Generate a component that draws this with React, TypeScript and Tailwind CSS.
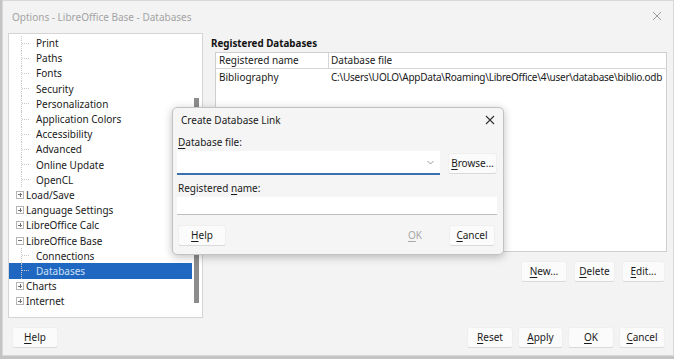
import React from 'react'

const font = { fontFamily: '"Noto Sans", "Open Sans", sans-serif' }

type Node = { label: string; level: 0 | 1; expander?: '+' | '-'; selected?: boolean }

const tree: Node[] = [
  { label: 'Print', level: 1 },
  { label: 'Paths', level: 1 },
  { label: 'Fonts', level: 1 },
  { label: 'Security', level: 1 },
  { label: 'Personalization', level: 1 },
  { label: 'Application Colors', level: 1 },
  { label: 'Accessibility', level: 1 },
  { label: 'Advanced', level: 1 },
  { label: 'Online Update', level: 1 },
  { label: 'OpenCL', level: 1 },
  { label: 'Load/Save', level: 0, expander: '+' },
  { label: 'Language Settings', level: 0, expander: '+' },
  { label: 'LibreOffice Calc', level: 0, expander: '+' },
  { label: 'LibreOffice Base', level: 0, expander: '-' },
  { label: 'Connections', level: 1 },
  { label: 'Databases', level: 1, selected: true },
  { label: 'Charts', level: 0, expander: '+' },
  { label: 'Internet', level: 0, expander: '+' },
]

function Expander({ sign }: { sign: '+' | '-' }) {
  return (
    <span className="relative flex h-[8px] w-[8px] items-center justify-center border border-[#b5b5b5] bg-white">
      <span className="absolute h-px w-[4px] bg-[#707070]" />
      {sign === '+' ? <span className="absolute h-[4px] w-px bg-[#707070]" /> : null}
    </span>
  )
}

function TreeRow({ node }: { node: Node }) {
  return (
    <div
      className={
        'relative flex h-[15.2px] items-center text-[10px] leading-none ' +
        (node.selected ? 'mr-[10px] bg-[#1f67c1] text-[#cfe0f5]' : 'text-[#1a1a1a]')
      }
    >
      {node.level === 1 ? (
        <>
          <span className="absolute left-[12px] top-0 h-full w-px border-l border-dotted border-[#c8c8c8]" />
          <span className="ml-[13px] h-px w-[7px] border-t border-dotted border-[#c8c8c8]" />
          <span className="ml-[7px]">{node.label}</span>
        </>
      ) : (
        <>
          <span className="ml-[7px]">
            <Expander sign={node.expander ?? '+'} />
          </span>
          <span className="ml-[2px]">{node.label}</span>
        </>
      )}
    </div>
  )
}

function Btn({ children, className = '' }: { children: React.ReactNode; className?: string }) {
  return (
    <div
      className={
        'flex h-[21px] shrink-0 items-center justify-center rounded-[3px] border border-[#efefef] border-b-[#dadada] bg-[#fbfbfb] text-[10px] text-[#1a1a1a] ' +
        className
      }
    >
      {children}
    </div>
  )
}

function U({ c }: { c: string }) {
  return <span className="underline underline-offset-2">{c}</span>
}

export default function App() {
  return (
    <div className="relative h-[359px] w-[674px] overflow-hidden bg-[#c4c4c4]" style={font}>
      <div className="ml-[2px] flex h-[356px] flex-col border border-[#d8d8d8] bg-[#f3f3f3]">
        {/* title bar */}
        <div className="flex h-[32px] items-center justify-between pl-[9px] pr-[9px]">
          <span className="text-[10px] text-[#a3a3a3]">Options - LibreOffice Base - Databases</span>
          <svg width="10" height="10" viewBox="0 0 10 10" className="mr-[2px] mt-[-2px]">
            <path d="M1 1 L9 9 M9 1 L1 9" stroke="#9a9a9a" strokeWidth="1" />
          </svg>
        </div>

        <div className="flex">
          {/* tree */}
          <div className="relative ml-[5px] h-[285px] w-[195px] shrink-0 border border-[#d4d4d4] bg-white pt-[1.5px]">
            {tree.map((n) => (
              <TreeRow key={n.label} node={n} />
            ))}
            <div className="absolute left-[185px] top-[64px] h-[205px] w-[5px] bg-[#8c8c8c]" />
          </div>

          {/* right pane */}
          <div className="ml-[8px] flex min-w-0 flex-1 flex-col">
            <div className="mt-[6px] text-[9.8px] font-bold leading-none text-[#111]">Registered Databases</div>
            <div className="ml-[4px] mr-[6px] mt-[3px] h-[200px] overflow-hidden border border-[#cfcfcf] bg-white">
              <div className="flex h-[16px] border-b border-[#d6d6d6] text-[10px] leading-none text-[#1a1a1a]">
                <div className="flex w-[113px] shrink-0 items-center border-r border-[#d6d6d6] pl-[3px]">Registered name</div>
                <div className="flex flex-1 items-center pl-[2px]">Database file</div>
              </div>
              <div className="flex h-[17px] text-[10px] leading-none text-[#1a1a1a]">
                <div className="flex w-[113px] shrink-0 items-center pl-[3px]">Bibliography</div>
                <div className="flex flex-1 items-center whitespace-nowrap pl-[2px] tracking-[-0.25px]">
                  C:\Users\UOLO\AppData\Roaming\LibreOffice\4\user\database\biblio.odb
                </div>
              </div>
            </div>
            <div className="mr-[8px] mt-[9px] flex justify-end gap-[7px]">
              <Btn className="w-[46px]">
                <U c="N" />
                ew...
              </Btn>
              <Btn className="w-[41px]">
                <U c="D" />
                elete
              </Btn>
              <Btn className="w-[43px]">
                <U c="E" />
                dit...
              </Btn>
            </div>
          </div>
        </div>

        {/* bottom buttons */}
        <div className="mt-[9px] flex items-center pl-[9px] pr-[8px]">
          <Btn className="w-[46px]">
            <U c="H" />
            elp
          </Btn>
          <div className="flex-1" />
          <div className="flex gap-[5px]">
            <Btn className="w-[46px]">
              <U c="R" />
              eset
            </Btn>
            <Btn className="w-[45px]">
              <U c="A" />
              pply
            </Btn>
            <Btn className="w-[46px]">
              <U c="O" />K
            </Btn>
            <Btn className="w-[46px]">
              <U c="C" />
              ancel
            </Btn>
          </div>
        </div>
      </div>

      {/* Create Database Link dialog */}
      <div className="absolute left-[172px] top-[107px] flex h-[148px] w-[332px] flex-col rounded-[5px] border border-[#c2c2c2] bg-[#f5f5f5] shadow-[0_2px_8px_rgba(0,0,0,0.25)]">
        <div className="flex h-[24px] items-center justify-between pl-[8px] pr-[8px]">
          <span className="text-[10px] text-[#1a1a1a]">Create Database Link</span>
          <svg width="10" height="10" viewBox="0 0 10 10">
            <path d="M1 1 L9 9 M9 1 L1 9" stroke="#333" strokeWidth="1.1" />
          </svg>
        </div>
        <div className="mt-[5px] pl-[5px] text-[10px] leading-none text-[#1a1a1a]">
          <U c="D" />
          atabase file:
        </div>
        <div className="mt-[4px] flex items-center pl-[4px] pr-[6px]">
          <div className="flex h-[24px] w-[263px] items-center justify-end border-b-2 border-[#3a6fb0] bg-white pr-[6px]">
            <svg width="7" height="5" viewBox="0 0 7 5">
              <path d="M0.5 1 L3.5 4 L6.5 1" fill="none" stroke="#9a9a9a" strokeWidth="1" />
            </svg>
          </div>
          <div className="flex-1" />
          <Btn className="w-[49px]">
            <U c="B" />
            rowse...
          </Btn>
        </div>
        <div className="mt-[8px] pl-[5px] text-[10px] leading-none text-[#1a1a1a]">
          Registered <U c="n" />
          ame:
        </div>
        <div className="ml-[4px] mr-[6px] mt-[4px] h-[18px] border-b border-[#bdbdbd] bg-white" />
        <div className="mt-[10px] flex items-center pl-[5px] pr-[8px]">
          <Btn className="w-[48px]">
            <U c="H" />
            elp
          </Btn>
          <div className="flex-1" />
          <div className="mr-[27px] text-[10px] text-[#a8a8a8]">
            <U c="O" />K
          </div>
          <Btn className="w-[46px]">
            <U c="C" />
            ancel
          </Btn>
        </div>
      </div>
    </div>
  )
}
